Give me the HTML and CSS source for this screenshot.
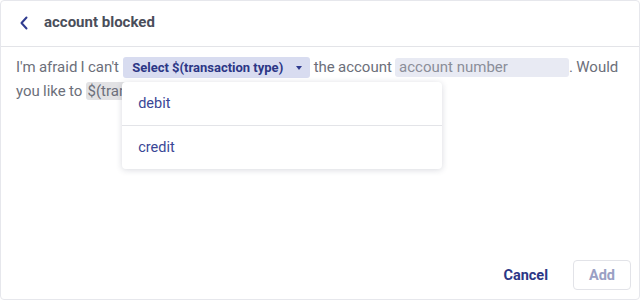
FILE: index.html
```html
<!DOCTYPE html>
<html>
<head>
<meta charset="utf-8">
<link rel="stylesheet" href="styles.css">
</head>
<body>
<div class="dialog">
  <div class="header">
    <svg class="back" width="10" height="14" viewBox="0 0 10 14"><path d="M7.5 1.5 L2.5 7 L7.5 12.5" fill="none" stroke="#2f3b8f" stroke-width="2" stroke-linecap="round" stroke-linejoin="round"/></svg>
    <span class="title">account blocked</span>
  </div>
  <div class="content">
    <p class="sentence">I'm afraid I can't <span class="select-wrap"><span class="select">Select $(transaction type) <svg class="caret" width="6" height="4" viewBox="0 0 6 4"><path d="M0 0 H6 L3 4 Z" fill="#2f3b8f"/></svg></span><span class="menu"><span class="item">debit</span><span class="item">credit</span></span></span> the account <span class="input">account number</span>. Would you like to <span class="var">$(transaction type)</span>?</p>
  </div>
  <div class="footer">
    <span class="cancel">Cancel</span>
    <span class="add">Add</span>
  </div>
</div>
</body>
</html>
```

FILE: styles.css
```css
html, body {
  margin: 0;
  padding: 0;
  background: #ffffff;
}
body {
  font-family: "Roboto", "Noto Sans", sans-serif;
}
.dialog {
  width: 640px;
  height: 300px;
  box-sizing: border-box;
  border: 1px solid #e6e7ec;
  border-radius: 4px;
  display: flex;
  flex-direction: column;
  background: #fff;
}
.header {
  height: 46px;
  border-bottom: 1px solid #e3e4e8;
  display: flex;
  align-items: center;
  padding-left: 18px;
  box-sizing: border-box;
}
.back {
  margin-right: 15px;
  margin-top: -2px;
}
.title {
  font-size: 15px;
  font-weight: 700;
  color: #4a4e5a;
  margin-top: -3px;
}
.content {
  flex: 1;
  padding: 8px 15px 0 15px;
}
.sentence {
  margin: 0;
  font-size: 15px;
  line-height: 24px;
  color: #6c6f7a;
  word-spacing: -0.5px;
}
.select-wrap {
  position: relative;
  display: inline-block;
  vertical-align: top;
  margin-top: 2px;
  margin-left: 1px;
  word-spacing: 0;
}
.select {
  display: block;
  background: #d8dcf0;
  color: #2c3786;
  font-size: 13px;
  font-weight: 700;
  line-height: 21px;
  padding: 0 8px 0 9px;
  border-radius: 3px;
}
.caret {
  margin-left: 10px;
  vertical-align: 2px;
}
.menu {
  position: absolute;
  left: -1px;
  top: 25px;
  width: 320px;
  background: #fff;
  border-radius: 4px;
  box-shadow: 0 1px 6px rgba(40, 45, 80, 0.18);
  display: flex;
  flex-direction: column;
  z-index: 2;
}
.item {
  display: block;
  height: 43px;
  line-height: 43px;
  padding-left: 16px;
  font-size: 14.5px;
  color: #3a4796;
}
.item + .item {
  border-top: 1px solid #e3e4e8;
}
.input {
  display: inline-block;
  background: #e8eaf3;
  color: #8b8e99;
  width: 170px;
  padding-left: 4px;
  line-height: 19px;
  border-radius: 3px;
  font-size: 15px;
  word-spacing: 0;
}
.var {
  background: #e2e2e4;
  border-radius: 3px;
  padding: 0 2px;
}
.footer {
  display: flex;
  justify-content: flex-end;
  align-items: center;
  gap: 25px;
  padding: 0 8px 9px 0;
}
.cancel {
  font-size: 14.5px;
  font-weight: 700;
  color: #2c3786;
}
.add {
  width: 58px;
  height: 30px;
  box-sizing: border-box;
  border: 1px solid #e2e3e8;
  border-radius: 4px;
  display: flex;
  align-items: center;
  justify-content: center;
  font-size: 14.5px;
  font-weight: 700;
  color: #9aa0c4;
}
```
